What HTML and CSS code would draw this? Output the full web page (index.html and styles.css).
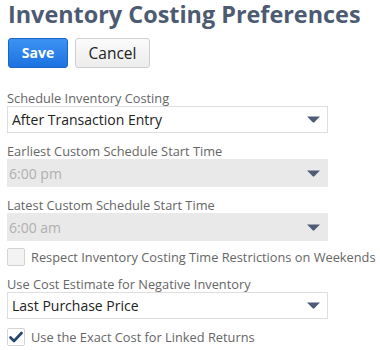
FILE: index.html
```html
<!DOCTYPE html>
<html>
<head>
<meta charset="utf-8">
<link rel="stylesheet" href="styles.css">
</head>
<body>
<div class="page">
  <h1 class="title">Inventory Costing Preferences</h1>
  <div class="actions">
    <button class="btn btn-primary">Save</button>
    <button class="btn btn-default">Cancel</button>
  </div>

  <div class="field">
    <div class="label">Schedule Inventory Costing</div>
    <div class="select">
      <span class="value">After Transaction Entry</span>
      <svg class="caret" width="13" height="7" viewBox="0 0 13 7"><path d="M0 0.5 H13 L7.3 6.3 Q6.5 7 5.7 6.3 Z" fill="#4e5d75"/></svg>
    </div>
  </div>

  <div class="field">
    <div class="label">Earliest Custom Schedule Start Time</div>
    <div class="select disabled">
      <span class="value">6:00 pm</span>
      <svg class="caret" width="13" height="7" viewBox="0 0 13 7"><path d="M0 0.5 H13 L7.3 6.3 Q6.5 7 5.7 6.3 Z" fill="#4e5d75"/></svg>
    </div>
  </div>

  <div class="field">
    <div class="label">Latest Custom Schedule Start Time</div>
    <div class="select disabled">
      <span class="value">6:00 am</span>
      <svg class="caret" width="13" height="7" viewBox="0 0 13 7"><path d="M0 0.5 H13 L7.3 6.3 Q6.5 7 5.7 6.3 Z" fill="#4e5d75"/></svg>
    </div>
  </div>

  <div class="check-row">
    <span class="checkbox"></span>
    <span class="check-label">Respect Inventory Costing Time Restrictions on Weekends</span>
  </div>

  <div class="field">
    <div class="label">Use Cost Estimate for Negative Inventory</div>
    <div class="select">
      <span class="value">Last Purchase Price</span>
      <svg class="caret" width="13" height="7" viewBox="0 0 13 7"><path d="M0 0.5 H13 L7.3 6.3 Q6.5 7 5.7 6.3 Z" fill="#4e5d75"/></svg>
    </div>
  </div>

  <div class="check-row check-row-last">
    <span class="checkbox checked">
      <svg width="14" height="12" viewBox="0 0 14 12"><path d="M1.5 6.5 L5 10 L12.5 2" fill="none" stroke="#24476f" stroke-width="2.6" stroke-linecap="round" stroke-linejoin="round"/></svg>
    </span>
    <span class="check-label">Use the Exact Cost for Linked Returns</span>
  </div>
</div>
</body>
</html>
```

FILE: styles.css
```css
html, body {
  margin: 0;
  padding: 0;
  background: #fff;
}
body {
  font-family: "Open Sans", "Noto Sans", sans-serif;
}
.page {
  padding: 0 0 0 7px;
  width: 373px;
}
.title {
  margin: 0;
  padding-left: 1px;
  font-size: 23.4px;
  line-height: 28px;
  font-weight: 700;
  color: #4c5a72;
  white-space: nowrap;
}
.actions {
  display: flex;
  gap: 7px;
  margin-top: 10px;
  padding-left: 1px;
}
.btn {
  font-family: "Open Sans", "Noto Sans", sans-serif;
  height: 30px;
  border-radius: 3px;
  padding: 0;
  line-height: 28px;
  cursor: pointer;
}
.btn-primary {
  width: 60px;
  font-size: 14px;
  color: #fff;
  font-weight: 700;
  background: linear-gradient(#3d92f2, #1c73e0);
  border: 1px solid #1a66c7;
}
.btn-default {
  width: 75px;
  font-size: 15.5px;
  color: #222;
  font-weight: 400;
  background: linear-gradient(#fbfbfb, #ececec);
  border: 1px solid #cfcfcf;
}
.actions + .field {
  margin-top: 22px;
}
.label {
  font-size: 12.8px;
  line-height: 16px;
  color: #666;
}
.select {
  display: flex;
  align-items: center;
  justify-content: space-between;
  width: 321px;
  height: 27px;
  box-sizing: border-box;
  border: 1px solid #dedede;
  background: #fff;
  padding: 0 7px 0 4px;
  margin-bottom: 10px;
  margin-top: 0;
}
.select .value {
  font-size: 14px;
  color: #222;
}
.select.disabled {
  background: #e9e9e9;
  border-color: #e9e9e9;
  height: 28px;
}
.select.disabled .value {
  color: #b0b0b0;
  margin-left: -3px;
}
.check-row {
  display: flex;
  align-items: center;
  gap: 6px;
  margin: -3px 0 10px 0;
}
.check-row-last {
  margin-top: -1px;
}
.checkbox {
  flex: none;
  width: 18px;
  height: 18px;
  box-sizing: border-box;
  border: 1px solid #d4d4d4;
  background: #f3f3f3;
  border-radius: 2px;
  display: flex;
  align-items: center;
  justify-content: center;
}
.checkbox.checked {
  background: #fff;
}
.check-label {
  font-size: 12.8px;
  color: #666;
  white-space: nowrap;
}
```
